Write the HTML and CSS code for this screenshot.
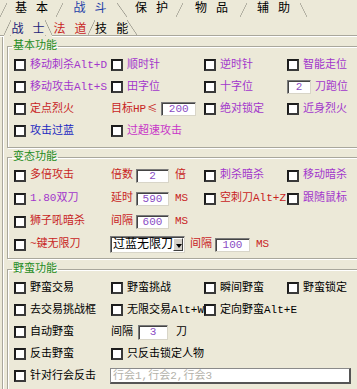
FILE: index.html
```html
<!DOCTYPE html>
<html lang="zh-CN">
<head>
  <meta charset="UTF-8">
  <title>战斗</title>
  <link rel="stylesheet" href="styles.css">
</head>
<body>
  <!-- main tabs -->
  <div class="tabs top">
    <i class="sl s0"></i><span class="tab t1">基 本</span>
    <i class="sl"></i><span class="tab t2 on">战 斗</span>
    <i class="sr wide"></i><span class="tab t3">保 护</span>
    <i class="sl"></i><span class="tab t4">物 品</span>
    <i class="sl"></i><span class="tab t5">辅 助</span>
    <i class="sr"></i>
  </div>

  <!-- sub tabs -->
  <div class="tabs sub">
    <i class="edge"></i>
    <i class="sl open"></i><span class="tab u1 navy open">战 士</span>
    <i class="sr open"></i><span class="tab u2 red">法 道</span>
    <i class="sl"></i><span class="tab u3">技 能</span>
    <i class="sr wide"></i>
    <i class="fill"></i>
  </div>

  <div class="page">
    <fieldset class="grp g1">
      <legend>基本功能</legend>
      <div class="row">
        <label class="cb purple"><i></i>移动刺杀Alt+D</label>
        <label class="cb purple"><i></i>顺时针</label>
        <label class="cb purple"><i></i>逆时针</label>
        <label class="cb purple"><i></i>智能走位</label>
      </div>
      <div class="row">
        <label class="cb purple"><i></i>移动攻击Alt+S</label>
        <label class="cb purple"><i></i>田字位</label>
        <label class="cb purple"><i></i>十字位</label>
        <span class="field purple"><input class="in w24" value="2">刀跑位</span>
      </div>
      <div class="row">
        <label class="cb red"><i></i>定点烈火</label>
        <span class="field red"><span>目标HP<span class="le">≤</span></span><input class="in w35" value="200"></span>
        <label class="cb purple"><i></i>绝对锁定</label>
        <label class="cb purple"><i></i>近身烈火</label>
      </div>
      <div class="row">
        <label class="cb blue"><i></i>攻击过蓝</label>
        <label class="cb magenta span"><i></i>过超速攻击</label>
      </div>
    </fieldset>

    <fieldset class="grp g2">
      <legend>变态功能</legend>
      <div class="row">
        <label class="cb red"><i></i>多倍攻击</label>
        <span class="field red">倍数<input class="in w33" value="2"><em>倍</em></span>
        <label class="cb purple"><i></i>刺杀暗杀</label>
        <label class="cb purple"><i></i>移动暗杀</label>
      </div>
      <div class="row">
        <label class="cb purple"><i></i>1.80双刀</label>
        <span class="field red">延时<input class="in w33" value="590"><em>MS</em></span>
        <label class="cb red"><i></i>空刺刀Alt+Z</label>
        <label class="cb purple"><i></i>跟随鼠标</label>
      </div>
      <div class="row">
        <label class="cb red"><i></i>狮子吼暗杀</label>
        <span class="field red">间隔<input class="in w33" value="600"><em>MS</em></span>
      </div>
      <div class="row">
        <label class="cb red"><i></i>~键无限刀</label>
        <span class="field red span">
          <span class="combo"><span class="val">过蓝无限刀</span><span class="drop"></span></span>
          <span class="lbl">间隔</span><input class="in w35" value="100"><em>MS</em>
        </span>
      </div>
    </fieldset>

    <fieldset class="grp g3">
      <legend>野蛮功能</legend>
      <div class="row">
        <label class="cb"><i></i>野蛮交易</label>
        <label class="cb"><i></i>野蛮挑战</label>
        <label class="cb"><i></i>瞬间野蛮</label>
        <label class="cb"><i></i>野蛮锁定</label>
      </div>
      <div class="row">
        <label class="cb"><i></i>去交易挑战框</label>
        <label class="cb"><i></i>无限交易Alt+W</label>
        <label class="cb"><i></i>定向野蛮Alt+E</label>
      </div>
      <div class="row">
        <label class="cb"><i></i>自动野蛮</label>
        <span class="field gap5">间隔<input class="in w30" value="3"><em>刀</em></span>
      </div>
      <div class="row">
        <label class="cb"><i></i>反击野蛮</label>
        <label class="cb span"><i></i>只反击锁定人物</label>
      </div>
      <div class="row">
        <label class="cb"><i></i>针对行会反击</label>
        <span class="field span"><input class="in guild" placeholder="行会1,行会2,行会3"></span>
      </div>
    </fieldset>
  </div>
</body>
</html>
```

FILE: styles.css
```css
body {
  margin: 0;
  width: 357px;
  height: 389px;
  overflow: hidden;
  background-color: #ece9d8;
  font: 11px/1 "Liberation Mono", "Noto Sans CJK SC", monospace;
  color: #000;
}

/* tab strips */
.tabs {
  display: flex;
  align-items: flex-end;
}

.tabs.top {
  height: 17px;
  font-size: 12px;
}

.tabs.sub {
  height: 19px;
  font-size: 12px;
}

.tab {
  height: 15px;
  line-height: 15px;
  text-align: center;
  white-space: nowrap;
  word-spacing: 2px;
}

.top .tab {
  height: 16px;
  line-height: 16px;
}

.sub .tab {
  height: 12px;
  line-height: 14px;
  padding-top: 3px;
}

.tab.on {
  color: #1f3fa8;
}

/* bottom edge of the sub tab strip, open under the active tab */
.sub > * {
  border-bottom: 1px solid #a9a79c;
  box-shadow: 0 1px 0 #fff;
}

.sub > .open {
  border-bottom-color: transparent;
  box-shadow: none;
}

.sub .edge {
  width: 4px;
  height: 15px;
  flex: none;
}

.sub .fill {
  flex: 1;
  height: 15px;
}

.t1 { width: 49px; }
.t2 { width: 54px; }
.t3 { width: 49px; }
.t4 { width: 57px; }
.t5 { width: 53px; }
.u1 { width: 34px; }
.u2 { width: 36px; }
.u3 { width: 32px; }

.sl, .sr {
  width: 7px;
  height: 14px;
  flex: none;
}

.sub .sl, .sub .sr {
  height: 15px;
}

.sl {
  background: linear-gradient(to top left, transparent calc(50% - 0.7px), #9a988c 50%, transparent calc(50% + 0.7px));
}

.sr {
  background: linear-gradient(to top right, transparent calc(50% - 0.7px), #9a988c 50%, transparent calc(50% + 0.7px));
}

.sr.wide {
  width: 10px;
}

/* tab page */
.page {
  margin: 0 0 0 2px;
  padding-left: 4px;
  border-left: 1px solid #a9a79c;
  box-shadow: inset 1px 0 0 #fff;
  height: 360px;
  overflow: hidden;
}

.grp {
  width: 380px;
  margin: 0;
  padding: 2px 0 5px 6px;
  border: 1px solid #a9a79c;
  box-shadow: inset 1px 1px 0 #fff, 1px 1px 0 #fff;
  min-width: 0;
}

.grp legend {
  margin-left: -2px;
  padding: 0 1px;
  line-height: 12px;
  color: #1e8c1e;
}

.g1 { margin-top: 4px; }
.g2 { margin-top: 3px; padding-top: 1px; padding-bottom: 2px; }
.g3 { margin-top: 4px; padding-top: 2px; }

.row {
  display: grid;
  grid-template-columns: 97px 93px 83px 80px;
  align-items: center;
  height: 22px;
}

.g2 .row {
  height: 23px;
}

.span {
  grid-column: 2 / 5;
}

/* checkbox */
.cb {
  display: flex;
  align-items: center;
  white-space: nowrap;
}

.cb i {
  width: 12px;
  height: 12px;
  box-sizing: border-box;
  margin-right: 4px;
  flex: none;
  background: #fff;
  border: 2px solid #1c1c1c;
  border-right-color: #3a3a3a;
  border-bottom-color: #3a3a3a;
}

/* label + edit box */
.field {
  display: flex;
  align-items: center;
  gap: 3px;
  white-space: nowrap;
}

.field em {
  font-style: normal;
  margin-left: 3px;
}

.field .le {
  font-family: "Noto Sans CJK SC", sans-serif;
  font-size: 10px;
  margin-left: 1px;
}

.g1 .field.purple {
  gap: 4px;
}

.g1 .field.red {
  gap: 4px;
}

.field.gap5 {
  gap: 5px;
}

.field .lbl {
  margin-left: 2px;
}

.in {
  height: 14px;
  box-sizing: border-box;
  padding: 0;
  border: 1px solid #7b7b7b;
  border-right-color: #d8d5c8;
  border-bottom-color: #d8d5c8;
  box-shadow: inset 1px 1px 0 #444;
  background: #fff;
  font: inherit;
  color: #8a4cc4;
  text-align: center;
  outline: none;
}

.w24 { width: 24px; }
.w30 { width: 30px; height: 15px; }
.w33 { width: 33px; }
.w35 { width: 35px; }

.in.guild {
  width: 241px;
  height: 16px;
  margin-left: -1px;
  text-align: left;
  padding-left: 2px;
  border: 1px solid #8a8a8a;
  border-right: 2px solid #555;
  border-bottom: 2px solid #555;
  box-shadow: none;
}

.in.guild::placeholder {
  color: #b4b2aa;
}

/* combo box */
.combo {
  display: flex;
  width: 75px;
  height: 17px;
  box-sizing: border-box;
  margin-left: -1px;
  border: 1px solid #7b7b7b;
  border-right-color: #d8d5c8;
  border-bottom-color: #d8d5c8;
  box-shadow: inset 1px 1px 0 #444;
  background: #fff;
  color: #000;
  font-size: 12px;
}

.combo .val {
  flex: 1;
  padding: 2px 0 0 2px;
}

.combo .drop {
  width: 13px;
  margin: 1px 1px 1px 0;
  background: #d4d0c8;
  border: 1px solid;
  border-color: #fff #404040 #404040 #fff;
  box-sizing: border-box;
  position: relative;
}

.combo .drop::after {
  content: "";
  position: absolute;
  left: 2px;
  top: 5px;
  border: 3.5px solid transparent;
  border-top: 4px solid #000;
  border-bottom: 0;
}

/* text colours */
.purple { color: #a236cc; }
.magenta { color: #c834c8; }
.red { color: #c8241e; }
.blue { color: #2228c0; }
.navy { color: #22237a; }
```
